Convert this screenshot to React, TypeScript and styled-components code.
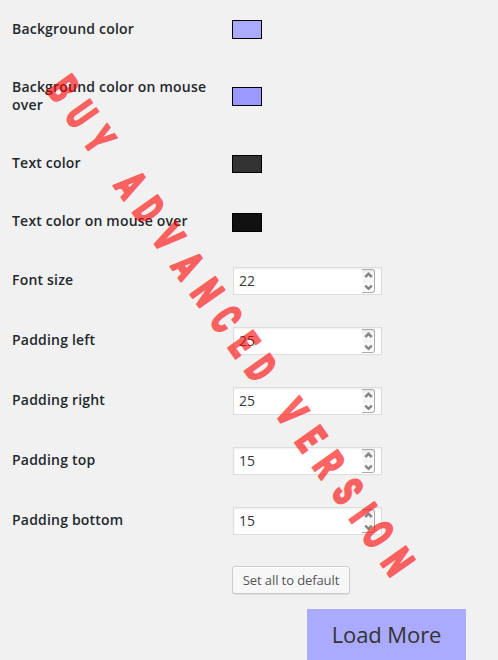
import React from "react";
import styled, { createGlobalStyle } from "styled-components";

const GlobalStyle = createGlobalStyle`
  body {
    margin: 0;
    background: #f1f1f1;
    font-family: "Open Sans", "Noto Sans", sans-serif;
  }
`;

const Page = styled.main`
  position: relative;
  box-sizing: border-box;
  width: 498px;
  height: 660px;
  overflow: hidden;
  background: #f1f1f1;
`;

const Row = styled.div<{ $height: number }>`
  display: grid;
  grid-template-columns: 220px 1fr;
  align-items: start;
  height: ${(p) => p.$height}px;
  padding-left: 12px;
`;

const Label = styled.label<{ $top: number }>`
  width: 200px;
  padding-top: ${(p) => p.$top}px;
  color: #23282d;
  font-size: 14px;
  font-weight: 600;
  letter-spacing: 0.2px;
  line-height: 18px;
`;

const Swatch = styled.div<{ $color: string; $top: number; $height: number }>`
  box-sizing: border-box;
  width: 30px;
  height: ${(p) => p.$height}px;
  margin-top: ${(p) => p.$top}px;
  border: 1px solid #000;
  background: ${(p) => p.$color};
`;

const Field = styled.div`
  box-sizing: border-box;
  display: flex;
  align-items: center;
  justify-content: space-between;
  width: 149px;
  height: 28px;
  margin: 13px 0 0 1px;
  padding: 0 6px 0 5px;
  border: 1px solid #ddd;
  background: #fff;
  box-shadow: inset 0 1px 2px rgba(0, 0, 0, 0.07);
  color: #32373c;
  font-size: 14px;
  line-height: 26px;
`;

const Spinner = styled.div`
  box-sizing: border-box;
  display: grid;
  grid-template-rows: 11px 11px;
  width: 13px;
  height: 24px;
  border: 1px solid #aaa;
  border-left: 0;
  border-radius: 0 3px 3px 0;
  background: linear-gradient(#e9e9e9, #f8f8f8 20%, #f8f8f8 48%, #e8e8e8 49%, #f7f7f7 53%, #fff);
`;

const Arrow = styled.svg`
  display: block;
  width: 13px;
  height: 12px;
  fill: none;
  stroke: #868686;
  stroke-width: 2.5;
`;

const Actions = styled.div`
  display: flex;
  padding: 12px 0 0 232px;
`;

const DefaultButton = styled.button`
  box-sizing: border-box;
  width: 118px;
  height: 28px;
  padding: 0;
  border: 1px solid #ccc;
  border-radius: 3px;
  background: #f7f7f7;
  box-shadow: inset 0 1px 0 #fff, 0 1px 0 rgba(0, 0, 0, 0.08);
  color: #555;
  font: 13px/26px "Open Sans", "Noto Sans", sans-serif;
  letter-spacing: -0.1px;
`;

const LoadMore = styled.button`
  display: block;
  width: 159px;
  height: 52px;
  margin: 15px 0 0 307px;
  padding: 0 0 2px;
  border: 0;
  background: #aaaaff;
  color: #333;
  font: 22px/50px "Open Sans", "Noto Sans", sans-serif;
  letter-spacing: -0.1px;
`;

const Watermark = styled.svg`
  position: absolute;
  inset: 0;
  width: 498px;
  height: 660px;
  opacity: 0.6;
  pointer-events: none;

  text {
    fill: #f00;
    stroke: #f00;
    stroke-width: 1.9;
    stroke-linejoin: round;
    font-family: Roboto, sans-serif;
    font-size: 43px;
    font-weight: 900;
    text-anchor: middle;
    white-space: pre;
  }
`;

const colors = [
  { label: "Background color", color: "#aaaaff", height: 58, labelTop: 20, top: 20, box: 19 },
  { label: "Background color on mouse over", color: "#9999ff", height: 76, labelTop: 20, top: 29, box: 19 },
  { label: "Text color", color: "#333333", height: 58, labelTop: 20, top: 21, box: 18 },
  { label: "Text color on mouse over", color: "#111111", height: 62, labelTop: 20, top: 21, box: 19 },
];

const numbers = [
  ["Font size", "22"],
  ["Padding left", "25"],
  ["Padding right", "25"],
  ["Padding top", "15"],
  ["Padding bottom", "15"],
];

const STRETCH = 0.65;
const letterCentres = [
  0, 31.5, 62.4, 90, 117.5, 148.4, 182.2, 216.3, 249.3, 282.2, 312.9, 342.7,
  370, 396.1, 428.8, 460.4, 492.8, 519.3, 545.8, 579.4,
];

export default function App() {
  return (
    <Page>
      <GlobalStyle />
      {colors.map((c) => (
        <Row key={c.label} $height={c.height}>
          <Label $top={c.labelTop}>{c.label}</Label>
          <Swatch $color={c.color} $top={c.top} $height={c.box} />
        </Row>
      ))}
      {numbers.map(([label, value]) => (
        <Row key={label} $height={60}>
          <Label $top={17}>{label}</Label>
          <Field>
            <span>{value}</span>
            <Spinner>
              <Arrow viewBox="0 0 13 12">
                <path d="M3.2 7 6.5 3.8 9.8 7" />
              </Arrow>
              <Arrow viewBox="0 0 13 12">
                <path d="M3.2 4.6 6.5 7.8 9.8 4.6" />
              </Arrow>
            </Spinner>
          </Field>
        </Row>
      ))}
      <Actions>
        <DefaultButton>Set all to default</DefaultButton>
      </Actions>
      <LoadMore>Load More</LoadMore>
      <Watermark viewBox="0 0 498 660">
        <text
          transform={`translate(63.5 88.5) rotate(54.76) scale(${STRETCH} 1)`}
          x={letterCentres.map((c) => (c / STRETCH).toFixed(1)).join(" ")}
          y="15.3"
        >
          BUY ADVANCED VERSION
        </text>
      </Watermark>
    </Page>
  );
}
